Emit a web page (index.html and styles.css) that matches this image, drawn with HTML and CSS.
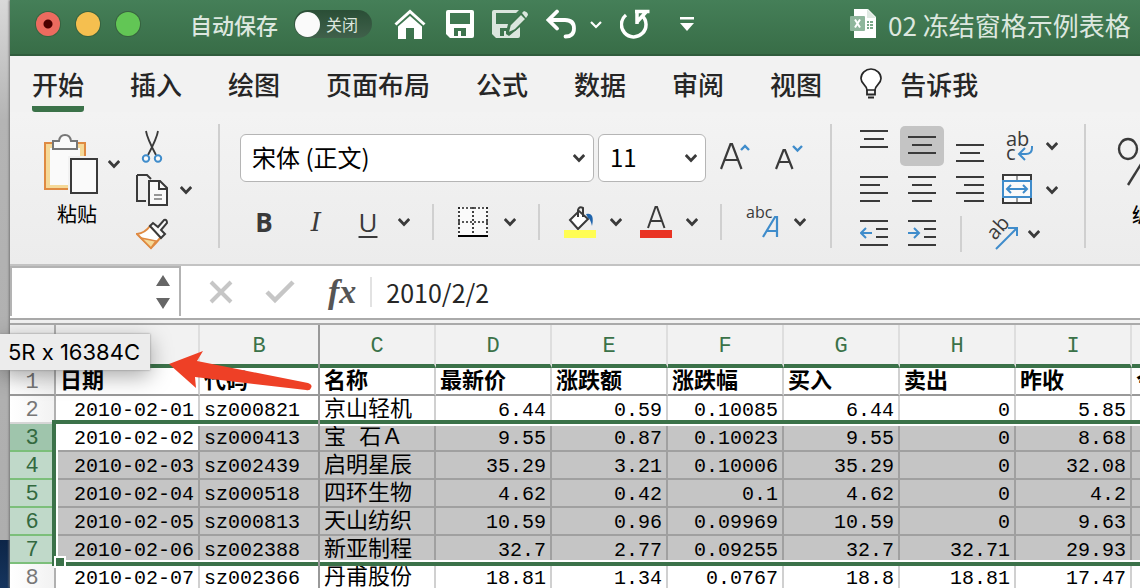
FILE: index.html
```html
<!DOCTYPE html>
<html lang="zh-CN">
<head>
<meta charset="utf-8">
<title>02 冻结窗格示例表格</title>
<link rel="stylesheet" href="styles.css">
</head>
<body>
<svg class="defs" aria-hidden="true">
  <symbol id="chev" viewBox="0 0 12 10"><path d="M.8 2 6 7.500 11.200 2" fill="none" stroke="currentColor" stroke-width="2.800"/></symbol>
</svg>
<div class="app">
  <header class="titlebar">
    <div class="lights">
      <button class="light light-red" aria-label="关闭窗口"></button>
      <button class="light light-yellow" aria-label="最小化"></button>
      <button class="light light-green" aria-label="缩放"></button>
    </div>
    <label class="autosave-label" for="autosave">自动保存</label>
    <label class="switch"><input type="checkbox" role="switch" id="autosave"><span>关闭</span></label>
    <div class="quick">
      <button aria-label="主页"><svg width="32" height="32" viewBox="0 0 32 32"><path d="M1.500 16.500 16 3.500 30.500 16.500" fill="none" stroke="#fff" stroke-width="3"/><path d="M4 18.500 16 8 28 18.500V31H20V20H12V31H4z" fill="#fff"/></svg></button>
      <button aria-label="保存"><svg width="28" height="28" viewBox="0 0 28 28"><path fill="#fff" fill-rule="evenodd" d="M2 0H26Q28 0 28 2V26Q28 28 26 28H4L0 24V2Q0 0 2 0zM4 3V14H24V3zM8 18V26H12V21H15V26H20V18z"/></svg></button>
      <button aria-label="另存为"><svg width="36" height="30" viewBox="0 0 36 30"><path fill="#dbe6de" fill-rule="evenodd" d="M2 1H27L24 4H4V15H16L15 19H8V27H12V22H14V25L17 27 28 18V27Q28 29 26 29H4L0 25V3Q0 1 2 1z"/><path d="M16 24 18 16 29 5 34 10 23 21z" fill="#dbe6de" stroke="#3d744c" stroke-width="1.500"/><path d="M30 4 32 2Q36 3 36 6L34 9z" fill="#dbe6de"/></svg></button>
      <button aria-label="撤销"><svg width="30" height="30" viewBox="0 0 30 30"><path d="M11 2.500 2.500 11 11 19.500M3 11H19Q28 11 28 19.500 28 27.500 19.500 27.500" fill="none" stroke="#fff" stroke-width="3.800" stroke-linecap="round"/></svg></button>
      <button aria-label="撤销列表" class="quick-chev"><svg width="12" height="9" viewBox="0 0 12 9"><path d="M1 2 6 7 11 2" fill="none" stroke="#fff" stroke-width="2.200"/></svg></button>
      <button aria-label="重做"><svg width="30" height="30" viewBox="0 0 30 30"><path d="M6 6A12.300 12.300 0 1 0 22 6.500M17 15V3M15 2.500H29.500M17 13 26 3" fill="none" stroke="#fff" stroke-width="3.500"/></svg></button>
      <button aria-label="自定义工具栏" class="quick-menu"><svg width="14" height="14" viewBox="0 0 14 14"><path d="M0 0H14V2.500H0zM0 6H14L7 14z" fill="#fff"/></svg></button>
    </div>
    <div class="doc">
      <svg width="28" height="30" viewBox="0 0 28 30"><path d="M4 0H18L26 8V29H4z" fill="#fff"/><path d="M17 0 26 9H17z" fill="#dfe9e2"/><path d="M17 12H19V14H17zM20 12H23V14H20zM17 15H19V17H17zM20 15H23V17H20zM17 18H19V20H17zM20 18H23V20H20z" fill="#7ba98a"/><rect y="7" width="15" height="15" rx="1" fill="#8fb69c"/><path d="M5 10.500 10 18.500M10 10.500 5 18.500" stroke="#fff" stroke-width="2"/></svg>
      <span>02 冻结窗格示例表格</span>
    </div>
  </header>

  <nav class="tabs">
    <button class="tab tab-active">开始</button>
    <button class="tab">插入</button>
    <button class="tab">绘图</button>
    <button class="tab">页面布局</button>
    <button class="tab">公式</button>
    <button class="tab">数据</button>
    <button class="tab">审阅</button>
    <button class="tab">视图</button>
    <button class="tab tell"><svg width="22" height="31" viewBox="0 0 22 31"><path d="M7 22C7 17 1 16 1 10.500A10 9.500 0 0 1 21 10.500C21 16 15 17 15 22z" fill="#fff" stroke="#262626" stroke-width="1.700"/><path d="M7 22V26.500H15V22M8 29.500H14" fill="none" stroke="#262626" stroke-width="1.800"/></svg>告诉我</button>
  </nav>

  <section class="ribbon">
    <div class="group clipboard">
      <div class="paste">
        <button class="paste-main" aria-label="粘贴"><svg width="54" height="61" viewBox="0 0 54 61"><path d="M1 10H41V56H1z" fill="#f5d998" stroke="#df8a42" stroke-width="2"/><path d="M6 15H36V52H6z" fill="#fafafa"/><path d="M9 8H15C16 0 26 0 27 8H33V16H9z" fill="#fafafa" stroke="#777" stroke-width="2"/><path d="M24 23H54V61H24z" fill="#f2f2f2"/><path d="M27 26H53V60H27z" fill="#fafafa" stroke="#3a3a3a" stroke-width="2"/></svg></button>
        <button class="drop paste-drop" aria-label="粘贴选项"><svg><use href="#chev"/></svg></button>
        <span class="paste-label">粘贴</span>
      </div>
      <div class="clip-tools">
        <button aria-label="剪切"><svg width="32" height="34" viewBox="0 0 32 34"><path d="M10 2Q11 9 20 26M22 2Q21 9 12 26" fill="none" stroke="#3a3a3a" stroke-width="1.800"/><circle cx="10" cy="29.500" r="3.200" fill="#fafafa" stroke="#3f8ccb" stroke-width="2"/><circle cx="22" cy="29.500" r="3.200" fill="#fafafa" stroke="#3f8ccb" stroke-width="2"/></svg></button>
        <span></span>
        <button aria-label="复制"><svg width="32" height="34" viewBox="0 0 32 34"><path d="M1 2H11L15 6M10 28H1V2" fill="none" stroke="#3a3a3a" stroke-width="2"/><path d="M13 8H24L31 15V32H13z" fill="#fafafa" stroke="#3a3a3a" stroke-width="2"/><path d="M23 8V16H31" fill="none" stroke="#3a3a3a" stroke-width="2"/><path d="M18 22H26M18 26H26" stroke="#777" stroke-width="1.500"/></svg></button>
        <button class="drop" aria-label="复制选项"><svg><use href="#chev"/></svg></button>
        <button aria-label="格式刷"><svg width="32" height="34" viewBox="0 0 32 34"><path d="M1 17Q9 16 14 9L25 20Q20 26 15 31z" fill="#fff" stroke="#df8a42" stroke-width="2"/><path d="M5 21 20 24 15 31z" fill="#f5d998" stroke="#df8a42" stroke-width="1.500"/><path d="M14 9 17 6 22 10 28 3Q31 2 31 6L25 13 29 17 25 21z" fill="#fafafa" stroke="#3a3a3a" stroke-width="2"/></svg></button>
      </div>
    </div>

    <div class="group font">
      <div class="font-row">
        <div class="select font-name"><select aria-label="字体"><option>宋体 (正文)</option></select><svg class="chev"><use href="#chev"/></svg></div>
        <div class="select font-size"><select aria-label="字号"><option>11</option></select><svg class="chev"><use href="#chev"/></svg></div>
        <button class="grow" aria-label="增大字号"><svg width="32" height="30" viewBox="0 0 32 30"><path d="M1 26 10.500 1H12L21.500 26M5 17H18" fill="none" stroke="#3a3a3a" stroke-width="2.200"/><path d="M21 7 25 3 29 7" fill="none" stroke="#3f8ccb" stroke-width="2.400"/></svg></button>
        <button class="shrink" aria-label="减小字号"><svg width="30" height="30" viewBox="0 0 30 30"><path d="M1 26 8.500 7H10L17.500 26M4 19H15" fill="none" stroke="#3a3a3a" stroke-width="2.200"/><path d="M18 3 22.500 7.500 27 3" fill="none" stroke="#3f8ccb" stroke-width="2.400"/></svg></button>
      </div>
      <div class="style-row">
        <button class="glyph bold">B</button>
        <button class="glyph italic">I</button>
        <button class="glyph under">U</button>
        <button class="drop" aria-label="下划线选项"><svg><use href="#chev"/></svg></button>
        <i class="bar"></i>
        <button class="borders" aria-label="边框"><svg width="30" height="30" viewBox="0 0 30 30"><path d="M0 0H30V28H0z" fill="#fafafa"/><path d="M0 1H30M0 15H30M1 0V27M15 0V27M29 0V27" fill="none" stroke="#222" stroke-width="1.700" stroke-dasharray="2 2"/><path d="M0 29H30" stroke="#000" stroke-width="2"/></svg></button>
        <button class="drop" aria-label="边框选项"><svg><use href="#chev"/></svg></button>
        <i class="bar"></i>
        <button aria-label="填充颜色"><svg width="32" height="34" viewBox="0 0 32 34"><path d="M6 15 15 6 24 14 14 24z" fill="#fff" stroke="#3a3a3a" stroke-width="2"/><path d="M14 12V5Q15 1 19 3V12" fill="none" stroke="#3a3a3a" stroke-width="2"/><path d="M22 9Q31 7 28 21Q26 13 24 13z" fill="#1f64ac"/><path d="M0 25H32V33H0z" fill="#fffd54"/></svg></button>
        <button class="drop" aria-label="填充选项"><svg><use href="#chev"/></svg></button>
        <button aria-label="字体颜色"><svg width="32" height="34" viewBox="0 0 32 34"><path d="M8 23 15.500 2H17L24.500 23M11 16H22" fill="none" stroke="#3a3a3a" stroke-width="2"/><path d="M0 25H32V33H0z" fill="#e93323"/></svg></button>
        <button class="drop" aria-label="颜色选项"><svg><use href="#chev"/></svg></button>
        <i class="bar"></i>
        <button class="phonetic" aria-label="拼音指南"><svg width="34" height="34" viewBox="0 0 34 34"><text x="0" y="13" class="svg-abc">abc</text><path d="M17 32 29 12H31V32M20 26H31" fill="none" stroke="#3f8ccb" stroke-width="2.200"/></svg></button>
        <button class="drop" aria-label="拼音选项"><svg><use href="#chev"/></svg></button>
      </div>
    </div>

    <div class="group align">
      <div class="align-grid">
        <button aria-label="顶端对齐"><svg width="28" height="40" viewBox="0 0 28 40"><path d="M0 5H28M4 13H24M0 21H28"/></svg></button>
        <button class="on" aria-label="垂直居中"><svg width="28" height="40" viewBox="0 0 28 40"><path d="M0 11H28M4 19H24M0 27H28"/></svg></button>
        <button aria-label="底端对齐"><svg width="28" height="40" viewBox="0 0 28 40"><path d="M0 19H28M4 27H24M0 35H28"/></svg></button>
        <button aria-label="左对齐"><svg width="28" height="40" viewBox="0 0 28 40"><path d="M0 7H28M0 15H20M0 23H28M0 31H20"/></svg></button>
        <button aria-label="居中"><svg width="28" height="40" viewBox="0 0 28 40"><path d="M0 7H28M4 15H24M0 23H28M4 31H24"/></svg></button>
        <button aria-label="右对齐"><svg width="28" height="40" viewBox="0 0 28 40"><path d="M0 7H28M8 15H28M0 23H28M8 31H28"/></svg></button>
        <button aria-label="减少缩进"><svg width="28" height="40" viewBox="0 0 28 40"><path d="M0 7H28M16 15H28M16 23H28M0 31H28"/><path class="blue" d="M12 19H1M6 14 1 19 6 24"/></svg></button>
        <button aria-label="增加缩进"><svg width="28" height="40" viewBox="0 0 28 40"><path d="M0 7H28M16 15H28M16 23H28M0 31H28"/><path class="blue" d="M0 19H11M6 14 11 19 6 24"/></svg></button>
        <i class="bar"></i>
      </div>
      <div class="wrap-tools">
        <div class="tool"><button aria-label="自动换行"><svg width="32" height="40" viewBox="0 0 32 40"><text x="4" y="20" class="svg-ab">ab</text><text x="4" y="34" class="svg-ab">c</text><path class="blue" d="M30 20V22Q30 28 24 28H17M23 22 17 28 23 34"/></svg></button><button class="drop" aria-label="换行选项"><svg><use href="#chev"/></svg></button></div>
        <div class="tool"><button aria-label="合并居中"><svg width="32" height="36" viewBox="0 0 32 36"><path d="M1 3H29V31H1z" fill="#fafafa" stroke="#3a3a3a" stroke-width="2"/><path d="M15 3V9M15 25V31" stroke="#3a3a3a"/><path d="M1 9H29V25H1z" fill="#fafafa" stroke="#3f8ccb" stroke-width="2"/><path class="blue" d="M5 17H25M9 13 5 17 9 21M21 13 25 17 21 21"/></svg></button><button class="drop" aria-label="合并选项"><svg><use href="#chev"/></svg></button></div>
        <div class="tool tool-angle"><button aria-label="方向"><svg width="34" height="40" viewBox="0 0 34 40"><text x="0" y="0" class="svg-ab" transform="translate(11 27) rotate(-48)">ab</text><path class="blue" d="M12 35 32 15M24 14H33V22"/></svg></button><button class="drop" aria-label="方向选项"><svg><use href="#chev"/></svg></button></div>
      </div>
    </div>

    <div class="group number">
      <button><svg width="72" height="56" viewBox="0 0 72 56"><ellipse cx="12" cy="15" rx="9" ry="10" fill="none" stroke="#3a3a3a" stroke-width="2.400"/><path d="M12 51 40 6" stroke="#3a3a3a" stroke-width="2.400"/><ellipse cx="44" cy="40" rx="9" ry="10" fill="none" stroke="#3a3a3a" stroke-width="2.400"/></svg><span>编号</span></button>
    </div>
  </section>

  <section class="formula">
    <div class="namebox">
      <input type="text" aria-label="名称框">
      <svg width="14" height="36" viewBox="0 0 14 36"><path d="M0 12 7 1 14 12zM0 24H14L7 35z" fill="#666"/></svg>
    </div>
    <button class="cancel" aria-label="取消"><svg width="24" height="24" viewBox="0 0 24 24"><path d="M2 2 22 22M22 2 2 22" stroke="#c6c6c6" stroke-width="4"/></svg></button>
    <button class="accept" aria-label="输入"><svg width="30" height="24" viewBox="0 0 30 24"><path d="M2 12 10 20 28 2" fill="none" stroke="#c6c6c6" stroke-width="4.500"/></svg></button>
    <button class="fx" aria-label="插入函数">fx</button>
    <input class="formula-input" type="text" aria-label="编辑栏" value="2010/2/2">
  </section>

  <main class="sheet">
    <table>
      <colgroup><col class="c-head"><col class="c-a"><col class="c-b"><col span="8" class="c-std"></colgroup>
      <thead><tr><th></th><th></th><th>B</th><th>C</th><th>D</th><th>E</th><th>F</th><th>G</th><th>H</th><th>I</th><th></th></tr></thead>
      <tbody>
        <tr class="titles"><th>1</th><td>日期</td><td>代码</td><td>名称</td><td>最新价</td><td>涨跌额</td><td>涨跌幅</td><td>买入</td><td>卖出</td><td>昨收</td><td>今开</td></tr>
        <tr><th>2</th><td>2010-02-01</td><td>sz000821</td><td>京山轻机</td><td>6.44</td><td>0.59</td><td>0.10085</td><td>6.44</td><td>0</td><td>5.85</td><td></td></tr>
        <tr class="sel current"><th>3</th><td>2010-02-02</td><td>sz000413</td><td>宝 石Ａ</td><td>9.55</td><td>0.87</td><td>0.10023</td><td>9.55</td><td>0</td><td>8.68</td><td></td></tr>
        <tr class="sel"><th>4</th><td>2010-02-03</td><td>sz002439</td><td>启明星辰</td><td>35.29</td><td>3.21</td><td>0.10006</td><td>35.29</td><td>0</td><td>32.08</td><td></td></tr>
        <tr class="sel"><th>5</th><td>2010-02-04</td><td>sz000518</td><td>四环生物</td><td>4.62</td><td>0.42</td><td>0.1</td><td>4.62</td><td>0</td><td>4.2</td><td></td></tr>
        <tr class="sel"><th>6</th><td>2010-02-05</td><td>sz000813</td><td>天山纺织</td><td>10.59</td><td>0.96</td><td>0.09969</td><td>10.59</td><td>0</td><td>9.63</td><td></td></tr>
        <tr class="sel"><th>7</th><td>2010-02-06</td><td>sz002388</td><td>新亚制程</td><td>32.7</td><td>2.77</td><td>0.09255</td><td>32.7</td><td>32.71</td><td>29.93</td><td></td></tr>
        <tr><th>8</th><td>2010-02-07</td><td>sz002366</td><td>丹甫股份</td><td>18.81</td><td>1.34</td><td>0.0767</td><td>18.8</td><td>18.81</td><td>17.47</td><td></td></tr>
      </tbody>
    </table>
    <div class="selection"><i class="handle"></i></div>
    <div class="freeze"></div>
    <div class="size-tip" role="tooltip">5R x 16384C</div>
    <svg class="arrow" width="146" height="44" viewBox="0 0 146 44"><path d="M1 14 35 1 29 11 140 33Q145 35 143 38 142 41 138 40L27 27 28 38z" fill="#ee4026"/></svg>
  </main>
</div>
</body>
</html>
```

FILE: styles.css
```css
* { box-sizing: border-box; }

body {
  margin: 0;
  height: 100vh;
  padding-left: 10px;
  overflow: hidden;
  font-family: "Noto Sans CJK SC", "Open Sans", sans-serif;
  color: #262626;
  background: linear-gradient(#d9d9d9 0, #b4b4b4 120px, #aeaeae 540px, #0d2547 540px, #16355e 100%);
}

button, input, select { font: inherit; color: inherit; }
button { padding: 0; border: 0; background: none; display: inline-flex; align-items: center; }
svg { display: block; flex: none; }
.defs { position: absolute; width: 0; height: 0; }

.app {
  height: 100%;
  display: flex;
  flex-direction: column;
  background: #f2f2f2;
  box-shadow: -1px 0 2px #777;
}
.app > * { flex: none; }

/* Title bar */
.titlebar {
  display: flex;
  align-items: center;
  height: 56px;
  padding: 0 0 6px 26px;
  overflow: hidden;
  background: linear-gradient(#457f58, #386d47);
  border-bottom: 2px solid #305d3d;
  white-space: nowrap;
  color: #dce7df;
}
.lights { display: flex; gap: 16px; }
.light { width: 24px; height: 24px; border-radius: 50%; box-shadow: 0 0 0 1px #37623f; }
.light-red { background: radial-gradient(circle, #4d0000 0 4px, #ed6b5f 5px); }
.light-yellow { background: #f5bf4f; }
.light-green { background: #62c655; }
.autosave-label { margin-left: 50px; font-size: 22px; font-weight: 500; }
.switch {
  display: flex;
  align-items: center;
  gap: 6px;
  width: 78px;
  height: 28px;
  margin-left: 16px;
  padding-left: 1px;
  border-radius: 14px;
  background: linear-gradient(#2a4e36, #40614b);
  font-size: 16px;
}
.switch input {
  appearance: none;
  width: 25px;
  height: 25px;
  margin: 0;
  border-radius: 50%;
  background: #fafafa;
}
.quick { display: flex; align-items: center; gap: 18px; margin-left: 22px; }
.quick > :first-child { margin-right: 2px; }
.quick-chev { margin-left: -4px; }
.quick-menu { margin-left: 12px; }
.doc { display: flex; align-items: center; gap: 10px; margin-left: 156px; font-size: 26px; }

/* Tabs */
.tabs { display: flex; gap: 46px; height: 56px; padding-left: 22px; }
.tab {
  height: 56px;
  border-top: 4px solid transparent;
  border-bottom: 6px solid transparent;
  font-size: 26px;
  font-weight: 500;
  white-space: nowrap;
}
.tab-active { background: linear-gradient(#3b7249, #3b7249) no-repeat 0 100% / 100% 6px; background-origin: border-box; background-clip: border-box; border-radius: 3px; }
.tell { gap: 18px; margin-left: -8px; }

/* Ribbon */
.ribbon {
  display: flex;
  height: 154px;
  padding-top: 12px;
  overflow: hidden;
  background: linear-gradient(#f3f3f3, #ececec);
  border-bottom: 2px solid #c3c3c3;
}
.group { flex: none; height: 124px; border-right: 2px solid #cfcfcf; }
.drop svg, .chev { width: 12px; height: 10px; color: #3a3a3a; }
.bar { display: block; width: 2px; height: 36px; background: #d0d0d0; }

.clipboard { display: flex; width: 210px; padding-left: 34px; }
.paste { display: grid; grid-template-columns: 54px 12px; column-gap: 10px; align-content: start; padding-top: 9px; }
.paste-label { padding-left: 13px; margin-top: 5px; font-size: 20px; line-height: 30px; white-space: nowrap; color: #000; }
.clip-tools {
  display: grid;
  grid-template-columns: 32px 12px;
  grid-auto-rows: 34px;
  column-gap: 12px;
  row-gap: 10px;
  padding: 5px 0 0 16px;
  align-content: start;
}

.font { width: 612px; padding-left: 20px; }
.font-row { display: flex; padding-top: 10px; align-items: center; }
.select { display: grid; align-items: center; height: 48px; }
.select > * { grid-area: 1 / 1; }
.select select {
  appearance: none;
  width: 100%;
  height: 48px;
  padding: 0 11px 4px;
  border: 1px solid #b5b5b5;
  border-radius: 6px;
  background: #fff;
  color: #000;
  font-size: 24px;
}
.select .chev { justify-self: end; margin-right: 9px; pointer-events: none; }
.font-name { width: 354px; }
.font-size { width: 108px; margin-left: 4px; }
.grow { margin-left: 14px; }
.shrink { margin-left: 23px; }
.style-row { display: flex; align-items: center; height: 36px; margin-top: 22px; }
.glyph { justify-content: center; width: 24px; margin-right: 28px; font: 26px/34px "Open Sans", sans-serif; color: #3a3a3a; }
.bold { margin-left: 12px; font-weight: 700; }
.italic { font-family: "DejaVu Serif", serif; font-style: italic; }
.under { margin-right: 18px; text-decoration: underline; text-decoration-thickness: 2px; text-underline-offset: 4px; }
.style-row .bar { margin: 0 24px 0 22px; }
.style-row button + .drop { margin-left: 14px; }
.style-row .under + .drop { margin-left: 0; }
.style-row .borders + .drop { margin-left: 16px; }
.style-row .drop + button { margin-left: 18px; }
.svg-abc { font: 16px "Open Sans", sans-serif; fill: #3a3a3a; }
.svg-ab { font: 20px "Open Sans", sans-serif; fill: #3a3a3a; }

.align { display: flex; width: 254px; padding-left: 20px; }
.align-grid {
  display: grid;
  grid-template-columns: repeat(3, 44px);
  grid-auto-rows: 40px;
  gap: 4px;
  align-content: start;
  padding-top: 2px;
}
.align-grid button { justify-content: center; }
.align-grid .bar { margin-left: 12px; margin-top: 2px; }
.align-grid path { fill: none; stroke: #3a3a3a; stroke-width: 2; }
.on { border-radius: 5px; background: #c4c4c4; }
.align-grid .blue, .blue { fill: none; stroke: #3f8ccb; stroke-width: 2; }
.wrap-tools { display: grid; grid-auto-rows: 40px; gap: 4px; align-content: start; padding-top: 2px; margin-left: 10px; }
.tool { display: flex; align-items: center; gap: 12px; }
.tool-angle { margin-left: -18px; gap: 10px; }

.number { border: 0; padding: 10px 0 0 30px; }
.number button { flex-direction: column; font-size: 20px; font-weight: 500; line-height: 30px; gap: 10px; color: #000; }

/* Formula bar */
.formula {
  display: flex;
  align-items: center;
  height: 54px;
  background: #fff;
  border-bottom: 2px solid #aaa;
}
.namebox {
  display: flex;
  align-items: center;
  width: 171px;
  height: 50px;
  align-self: flex-start;
  padding-right: 9px;
  border: 2px solid #b3b3b3;
  border-bottom: 0;
}
.namebox input { flex: 1; min-width: 0; height: 44px; border: 0; background: none; }
.cancel { margin-left: 28px; }
.accept { margin-left: 32px; }
.fx { margin: 0 14px 0 33px; font: italic 700 34px/44px "Liberation Serif", serif; color: #555; }
.formula-input {
  flex: 1;
  min-width: 0;
  height: 30px;
  padding: 0 0 0 14px;
  border: 0;
  border-left: 2px solid #e2e2e2;
  background: #fff;
  font-size: 25px;
}

/* Sheet */
.sheet { position: relative; margin-top: 3px; border-top: 2px solid #aaa; }
table { width: 1238px; table-layout: fixed; border-collapse: separate; border-spacing: 0; background: #fff; }
.c-head { width: 46px; }
.c-a { width: 144px; }
.c-b { width: 120px; }
.c-std { width: 116px; }
th, td { padding: 4px 4px 0; overflow: hidden; white-space: nowrap; line-height: 22px; }
th { font: 22px/22px "Liberation Mono", monospace; }
thead th { height: 43px; border-right: 2px solid #dedede; border-bottom: 4px solid #3b7249; background: #f2f2f2; color: #3b7249; }
thead th:first-child { border-right-color: #b0b0b0; border-bottom-color: #f2f2f2; }
tbody th, td { height: 28px; border-right: 2px solid #d0d0d0; border-bottom: 2px solid #d6d6d6; }
tbody th { border-right-color: #b0b0b0; background: linear-gradient(90deg, #fff, #f2f2f2); color: #777; }
td { font-family: "Liberation Mono", "Noto Sans CJK SC", monospace; font-size: 20px; text-align: right; color: #000; }
td:nth-child(3), td:nth-child(4) { text-align: left; }
td:nth-child(4) { font-size: 22px; }
.titles td { font-size: 22px; font-weight: 700; text-align: left; }
.titles > * { border-bottom-color: #999; }
.sel td { background: #c5c5c5; border-color: #a0a0a0; }
.sel th { background: #c0d9c9; color: #33693f; border-bottom-color: #7cbf7a; }
.current th { background: #9fc5ac; }
.current td:nth-child(2) { background: #fff; }

.selection {
  position: absolute;
  top: 95px;
  left: 42px;
  right: -10px;
  height: 146px;
  border: 4px solid #3b7249;
  box-shadow: inset 0 0 0 2px #fff;
}
.handle { position: absolute; left: -2px; bottom: -6px; width: 12px; height: 12px; border: 2px solid #fff; background: #3b7249; }
.freeze { position: absolute; top: 0; bottom: 0; left: 308px; width: 2px; background: #999; }
.size-tip {
  position: absolute;
  top: 9px;
  left: -10px;
  padding: 0 10px 0 8px;
  background: #ececec;
  box-shadow: 0 0 2px #888, 0 6px 22px rgba(0, 0, 0, .35);
  font: 22px/36px Inter, sans-serif;
  color: #000;
}
.arrow { position: absolute; top: 25px; left: 158px; }
```
